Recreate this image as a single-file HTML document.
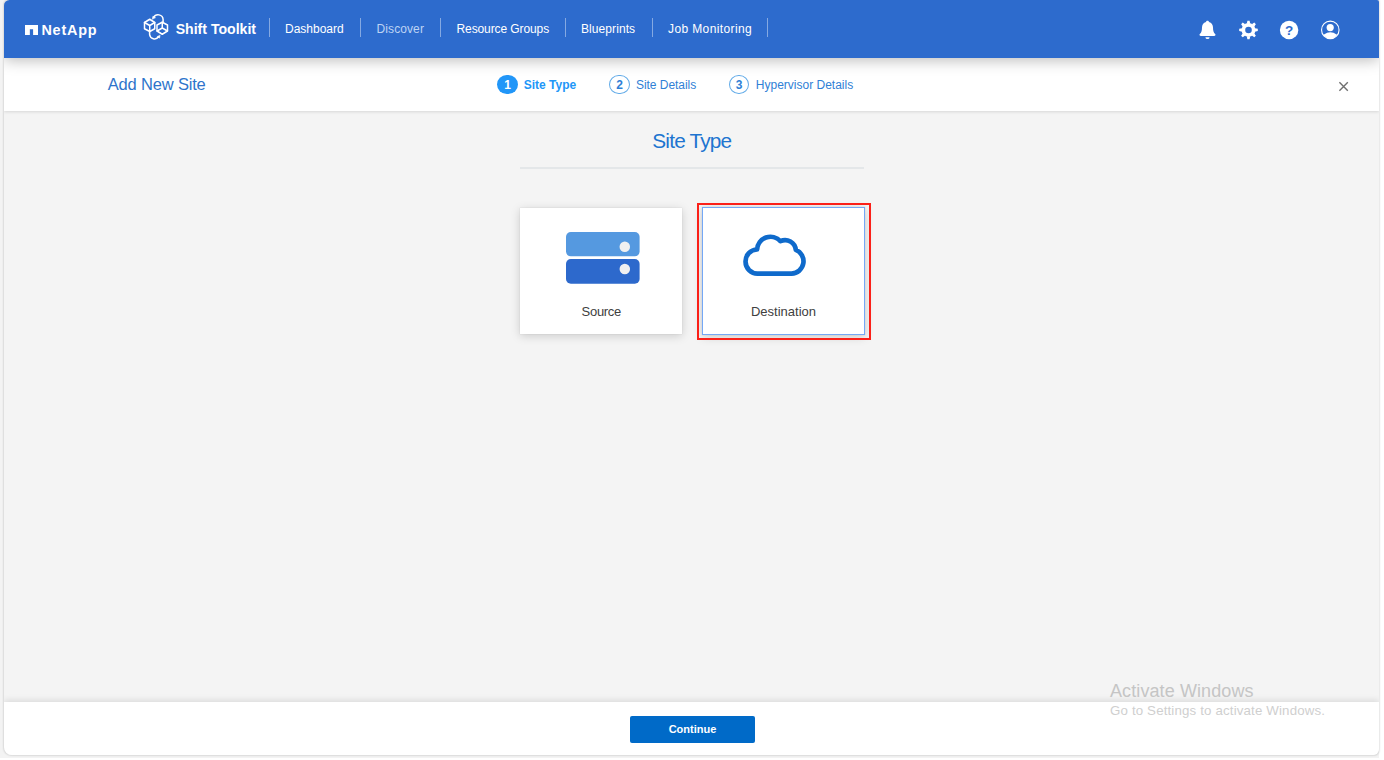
<!DOCTYPE html>
<html lang="en">
<head>
<meta charset="utf-8">
<title>Shift Toolkit - Add New Site</title>
<style>
*{box-sizing:border-box;margin:0;padding:0}
html,body{width:1384px;height:760px;overflow:hidden;background:#fff;font-family:"Liberation Sans",sans-serif;}
#frame{position:absolute;left:0;top:0;width:1378.800px;height:757.700px;background:#f3f3f3;}
#app{position:absolute;left:4px;top:0;width:1374.700px;height:755.300px;background:#f4f4f4;border-radius:5.500px 2px 6px 8px;overflow:hidden;box-shadow:0 0 1.500px 0.300px rgba(0,0,0,.10);}
#nav{position:absolute;left:0;top:0;width:100%;height:58px;background:#2d6bcd;z-index:5;box-shadow:0 2px 14px rgba(0,0,0,.28);}
.nt{position:absolute;color:#fff;white-space:nowrap;line-height:1;}
.sep{position:absolute;top:18px;width:1.200px;height:19px;background:rgba(255,255,255,.42);}
#sub{position:absolute;left:0;top:58px;width:100%;height:53px;background:#fff;z-index:3;box-shadow:0 1px 3px rgba(0,0,0,.12);}
.st{position:absolute;white-space:nowrap;line-height:1;}
.circ{position:absolute;width:20.400px;height:19.800px;border-radius:50%;top:16.600px;text-align:center;font-size:12px;line-height:21.200px;font-weight:bold;}
#title{position:absolute;left:0;width:1375.700px;text-align:center;top:128.800px;font-size:20.800px;color:#2074d0;line-height:24px;letter-spacing:-0.800px;}
#hr{position:absolute;left:516.400px;top:167.300px;width:344px;height:1.300px;background:#e4e7e9;}
.card{position:absolute;top:208px;width:162px;height:126px;background:#fff;box-shadow:0 2px 9px rgba(0,0,0,.17),0 0 1px rgba(0,0,0,.15);}
.card .lbl{position:absolute;left:0;width:100%;text-align:center;top:96.500px;font-size:13px;line-height:15px;color:#404040;}
#red{position:absolute;left:692.900px;top:202.900px;width:174.600px;height:137.500px;border:2px solid #fb2018;z-index:4;}
#foot{position:absolute;left:0;top:702px;width:100%;height:54px;background:#fff;box-shadow:0 -2px 6px rgba(0,0,0,.10);z-index:3;}
#btn{position:absolute;left:626px;top:14px;width:125px;height:26.600px;background:#006ac8;color:#fff;font-weight:bold;font-size:11px;text-align:center;line-height:26.600px;border-radius:2px;}
.wm{position:absolute;white-space:nowrap;line-height:1;z-index:9;}
</style>
</head>
<body>
<div id="frame"></div>
<div id="app">
  <div id="nav">
    <svg style="position:absolute;left:21px;top:24.700px" width="13" height="10.600" viewBox="0 0 13 10.600"><path d="M0 0h13v10.600H8.100V4.300H4.850v6.300H0z" fill="#fff"/></svg>
    <div class="nt" id="netapp" style="left:37.400px;top:22.500px;font-size:14.400px;font-weight:bold;letter-spacing:0.800px;">NetApp</div>
    <svg id="shifticon" style="position:absolute;left:134px;top:8px" width="36" height="38" viewBox="138 8 36 38" fill="none" stroke="#fff" stroke-width="1.500" stroke-linejoin="round" stroke-linecap="round">
      <path d="M149.750 19.250L154.750 22.500V28.750L149.750 31.500L144.500 28.750V22.500Z"/>
      <path d="M144.500 22.500L149.750 25.500L154.750 22.500M149.750 25.500V31.500"/>
      <path d="M162.250 22.250L167.500 25V31L162.250 34.250L157 31V25Z"/>
      <path d="M157 31L162.250 28L167.500 31M162.250 28V22.250"/>
      <path d="M153.600 17.600A5 5 0 0 1 163.100 19.500V22.200"/>
      <path d="M152.400 18.900L152.900 16.300L155.200 17.500Z" fill="#fff" stroke-width="0.600"/>
      <path d="M149.600 32V34.500A5 5 0 0 0 158.600 36.800"/>
      <path d="M160 35.500L159.600 38.100L157.300 36.900Z" fill="#fff" stroke-width="0.600"/>
    </svg>
    <div class="nt" id="shift" style="left:171.700px;top:21.700px;font-size:14.100px;font-weight:bold;">Shift Toolkit</div>
    <div class="sep" style="left:265px"></div>
    <div class="nt" id="n1" style="left:281px;top:22.500px;font-size:12px;">Dashboard</div>
    <div class="sep" style="left:356.200px"></div>
    <div class="nt" id="n2" style="left:372.500px;top:22.500px;font-size:12px;color:#bdd3f4;letter-spacing:0.100px">Discover</div>
    <div class="sep" style="left:436.300px"></div>
    <div class="nt" id="n3" style="left:452.500px;top:22.500px;font-size:12px;letter-spacing:-0.100px">Resource Groups</div>
    <div class="sep" style="left:561px"></div>
    <div class="nt" id="n4" style="left:577px;top:22.500px;font-size:12px;letter-spacing:0.080px">Blueprints</div>
    <div class="sep" style="left:648px"></div>
    <div class="nt" id="n5" style="left:664px;top:22.500px;font-size:12px;letter-spacing:0.380px">Job Monitoring</div>
    <div class="sep" style="left:763px"></div>
    <svg id="icons" style="position:absolute;left:1190px;top:12px" width="160" height="36" viewBox="1194 12 160 36">
      <!-- bell -->
      <path d="M1207.500 20.800c0.900 0 1.300 0.500 1.500 1.100c2.600 0.700 4 2.900 4 5.600c0 3.300 0.700 5.100 2.200 6.600c0.400 0.400 0.300 1.100 0 1.500c-0.200 0.300-0.500 0.500-1 0.500h-13.400c-0.500 0-0.800-0.200-1-0.500c-0.300-0.400-0.400-1.100 0-1.500c1.500-1.500 2.200-3.300 2.200-6.600c0-2.700 1.400-4.900 4-5.600c0.200-0.600 0.600-1.100 1.500-1.100z" fill="#fff"/>
      <path d="M1205.400 37.200h4.200a2.100 1.900 0 0 1-4.200 0z" fill="#fff"/>
      <!-- gear -->
      <g transform="translate(1248.500 29.950)" fill="#fff">
        <path fill-rule="evenodd" d="M0-6.900A6.900 6.900 0 1 0 0 6.900A6.900 6.900 0 1 0 0-6.900ZM0-3.300A3.300 3.300 0 1 1 0 3.300A3.300 3.300 0 1 1 0-3.300Z"/>
        <g id="teeth"><path d="M-1.700-6.300L-1.100-9.300H1.100L1.700-6.300Z"/><path d="M-1.700-6.300L-1.100-9.300H1.100L1.700-6.300Z" transform="rotate(45)"/><path d="M-1.700-6.300L-1.100-9.300H1.100L1.700-6.300Z" transform="rotate(90)"/><path d="M-1.700-6.300L-1.100-9.300H1.100L1.700-6.300Z" transform="rotate(135)"/><path d="M-1.700-6.300L-1.100-9.300H1.100L1.700-6.300Z" transform="rotate(180)"/><path d="M-1.700-6.300L-1.100-9.300H1.100L1.700-6.300Z" transform="rotate(225)"/><path d="M-1.700-6.300L-1.100-9.300H1.100L1.700-6.300Z" transform="rotate(270)"/><path d="M-1.700-6.300L-1.100-9.300H1.100L1.700-6.300Z" transform="rotate(315)"/></g>
      </g>
      <!-- help -->
      <circle cx="1289.100" cy="29.950" r="9.250" fill="#fff"/>
      <text x="1289.100" y="34.800" font-family="Liberation Sans, sans-serif" font-weight="bold" font-size="13.500" fill="#2d6bcd" text-anchor="middle">?</text>
      <!-- user -->
      <clipPath id="uc"><circle cx="1330.300" cy="29.900" r="8.600"/></clipPath>
      <circle cx="1330.300" cy="29.900" r="8.750" fill="none" stroke="#fff" stroke-width="1.100"/>
      <circle cx="1330.200" cy="27.600" r="3.600" fill="#fff"/>
      <ellipse cx="1330.300" cy="39" rx="8.300" ry="6.800" fill="#fff" clip-path="url(#uc)"/>
    </svg>
  </div>
  <div id="sub">
    <div class="st" id="addnew" style="left:103.800px;top:18.200px;font-size:16.500px;color:#2e74cb;letter-spacing:-0.180px;">Add New Site</div>
    <div class="circ" style="left:493.300px;background:#2196f8;color:#fff;font-weight:bold;">1</div>
    <div class="st" id="s1" style="left:519.700px;top:20.900px;font-size:12px;font-weight:bold;color:#2196f8;">Site Type</div>
    <div class="circ" style="left:605.300px;border:1.600px solid #62abe8;color:#2f7fd6;line-height:18.600px;">2</div>
    <div class="st" id="s2" style="left:632px;top:20.900px;font-size:12px;color:#2f7fd6;letter-spacing:-0.050px">Site Details</div>
    <div class="circ" style="left:724.900px;border:1.600px solid #62abe8;color:#2f7fd6;line-height:18.600px;">3</div>
    <div class="st" id="s3" style="left:751.800px;top:20.900px;font-size:12px;color:#2f7fd6;">Hypervisor Details</div>
    <svg style="position:absolute;left:1334px;top:23px" width="11" height="11" viewBox="0 0 11 11"><path d="M1.400 1.300l8.400 8.400M9.800 1.300l-8.400 8.400" stroke="#707070" stroke-width="1.400" fill="none"/></svg>
  </div>
  <div id="title">Site Type</div>
  <div id="hr"></div>
  <div class="card" id="c1" style="left:516.300px;top:207.800px;height:126.300px;">
    <svg style="position:absolute;left:45.900px;top:24.200px" width="74" height="52" viewBox="0 0 74 52">
      <rect x="0" y="0" width="73.600" height="24.300" rx="4.800" fill="#5599e0"/>
      <rect x="0" y="27" width="73.600" height="24.700" rx="4.800" fill="#2d69cc"/>
      <circle cx="58.800" cy="14.800" r="5.250" fill="#f0f0f0"/><circle cx="58.800" cy="37" r="5.250" fill="#f0f0f0"/>
    </svg>
    <div class="lbl" style="letter-spacing:-0.300px">Source</div>
  </div>
  <div class="card" id="c2" style="left:697.800px;top:207.300px;width:163.400px;height:127.800px;border:1.600px solid #74a8f6;">
    <div class="lbl" style="top:95.400px">Destination</div>
  </div>
  <svg style="position:absolute;left:731px;top:225px" width="80" height="60" viewBox="735 225 80 60" fill="none" stroke="#0f6acb" stroke-width="4.700" stroke-linejoin="round">
    <path d="M757.900 273.600H791.600A12.300 12.300 0 0 0 795.800 249.900A10.700 10.700 0 0 0 780.400 241.200A13.400 13.400 0 0 0 757.100 249.500A11.900 11.900 0 0 0 745.550 261.700A11.900 11.900 0 0 0 757.900 273.600Z"/>
  </svg>
  <div id="red"></div>
  <div id="foot">
    <div id="btn">Continue</div>
  </div>
  <div class="wm" id="w1" style="left:1106px;top:681.900px;font-size:18px;color:#c5c5c5;letter-spacing:0.100px;">Activate Windows</div>
  <div class="wm" id="w2" style="left:1106px;top:704.300px;font-size:13.300px;color:#cfcfcf;letter-spacing:0.150px;">Go to Settings to activate Windows.</div>
</div>
</body>
</html>
